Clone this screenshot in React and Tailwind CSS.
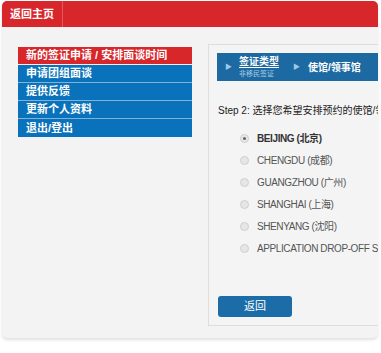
import React, { useState } from 'react';

const menuItems = [
  '新的签证申请 / 安排面谈时间',
  '申请团组面谈',
  '提供反馈',
  '更新个人资料',
  '退出/登出',
];

const posts = [
  'BEIJING (北京)',
  'CHENGDU (成都)',
  'GUANGZHOU (广州)',
  'SHANGHAI (上海)',
  'SHENYANG (沈阳)',
  'APPLICATION DROP-OFF SERVICE',
];

const App = () => {
  const [selected, setSelected] = useState(0);

  return (
    <div className="h-[353px] w-[381px] overflow-hidden bg-white pl-[2px] pt-[1px] font-['Liberation_Sans','Noto_Sans_CJK_SC',sans-serif]">
      <div className="h-[337px] w-[376px] overflow-hidden rounded-[5px] bg-[#f3f3f3] shadow-[0_2px_3px_rgba(0,0,0,0.12)]">
        <div className="flex h-[26px] items-stretch bg-[#d8272b]">
          <div className="flex items-center border-r border-[#e4575a] px-[8px] text-[11px] font-bold text-white">
            返回主页
          </div>
        </div>

        <div className="flex gap-[16px] pl-[16px] pt-[17px]">
          <ul className="mt-[3px] w-[174px] shrink-0">
            {menuItems.map((item, index) => (
              <li
                key={item}
                className={`flex h-[18px] items-center border-b pl-[8px] text-[11px] font-bold text-white last:border-b-0 ${
                  index === 0 ? 'border-[#eeeeee] bg-[#d8272b]' : 'border-[#7fb2d8] bg-[#0a72ba]'
                }`}
              >
                {item}
              </li>
            ))}
          </ul>

          <div className="h-[282px] w-[240px] shrink-0 border border-[#dedede] bg-[#f4f4f4] pl-[8px] pt-[8px]">
            <div className="flex h-[28px] items-center bg-[#1d69a1] pl-[8px] text-white">
              <span className="text-[7px] text-[#9cc8e8]">▶</span>
              <div className="ml-[7px] flex flex-col leading-none">
                <span className="text-[10px] font-bold underline underline-offset-2">签证类型</span>
                <span className="mt-[3px] text-[7px] text-[#a9c9e2]">非移民签证</span>
              </div>
              <span className="ml-[14px] text-[7px] text-[#9cc8e8]">▶</span>
              <span className="ml-[8px] text-[10px] font-bold">使馆/领事馆</span>
            </div>

            <p className="mt-[22px] whitespace-nowrap pl-[1px] text-[10px] text-[#222]">
              Step 2: 选择您希望安排预约的使馆/领事馆
            </p>

            <div className="mt-[14px] flex flex-col gap-[10px] pl-[23px]">
              {posts.map((post, index) => (
                <label
                  key={post}
                  className="flex h-[12px] cursor-pointer items-center gap-[8px] whitespace-nowrap text-[10px] tracking-[-0.4px]"
                  onClick={() => setSelected(index)}
                >
                  <span className="flex h-[9px] w-[9px] shrink-0 items-center justify-center rounded-full border border-[#cfcfcf] bg-[#e6e6e6]">
                    {selected === index && <span className="h-[3px] w-[3px] rounded-full bg-[#666]" />}
                  </span>
                  <span className={selected === index ? 'font-bold text-[#333]' : 'text-[#555]'}>{post}</span>
                </label>
              ))}
            </div>

            <button className="mt-[42px] ml-[1px] h-[21px] w-[74px] rounded-[3px] bg-[#1b6ca7] text-[11px] text-white">
              返回
            </button>
          </div>
        </div>
      </div>
    </div>
  );
};

export default App;
